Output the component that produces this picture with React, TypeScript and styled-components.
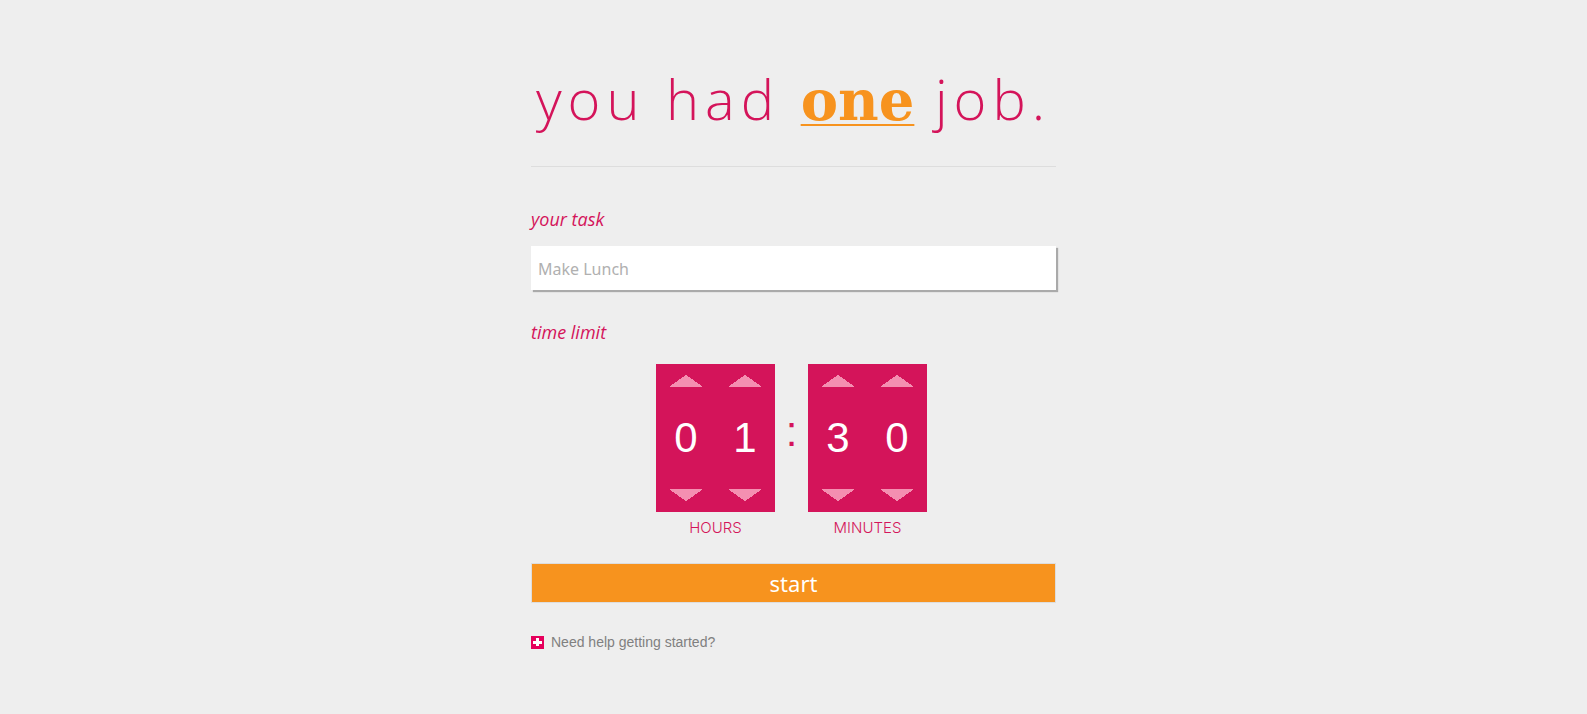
import React, { useState } from "react";
import styled, { createGlobalStyle } from "styled-components";

const pink = "#d4145a";
const orange = "#f7931e";

const GlobalStyle = createGlobalStyle`
  * { box-sizing: border-box; }
  body {
    margin: 0;
    background: #eee;
    color: ${pink};
    font-family: "Open Sans", sans-serif;
  }
`;

const Page = styled.main`
  width: 100%;
  max-width: 525px;
  margin: 0 auto;
  padding: 58px 0 40px;
`;

const Title = styled.h1`
  margin: 0;
  padding-bottom: 28px;
  border-bottom: 1px solid #ddd;
  font-size: 56px;
  font-weight: 300;
  line-height: 80px;
  letter-spacing: 6px;
  text-align: center;
  white-space: nowrap;
`;

const One = styled.em`
  color: ${orange};
  font-family: "DejaVu Serif", serif;
  font-style: normal;
  font-weight: 700;
  letter-spacing: 0;
  line-height: 1;
  text-decoration: underline;
  text-decoration-thickness: 2px;
  text-underline-offset: 4px;
`;

const Form = styled.form`
  display: flex;
  flex-direction: column;
  margin-top: 40px;
`;

const Label = styled.label`
  font-size: 18px;
  font-style: italic;
  line-height: 24px;
`;

const TaskInput = styled.input`
  width: 100%;
  height: 44px;
  margin: 15px 0 30px;
  padding: 2px 7px 0;
  border: 0;
  border-radius: 0;
  background: #fff;
  box-shadow: 2px 2px 1px #aaa;
  color: #555;
  font-family: "Noto Sans", sans-serif;
  font-size: 16px;
  &::placeholder { color: #b0b0b0; opacity: 1; }
`;

const Fieldset = styled.fieldset`
  min-width: 0;
  margin: 0;
  padding: 0;
  border: 0;
`;

const Legend = styled.legend`
  padding: 0;
  font-size: 18px;
  font-style: italic;
  line-height: 24px;
`;

const Clock = styled.div`
  display: flex;
  justify-content: center;
  margin-top: 20px;
  padding-right: 4px;
`;

const Unit = styled.div`
  width: 119px;
  text-align: center;
`;

const Panel = styled.div`
  display: flex;
  justify-content: center;
  gap: 1px;
  height: 148px;
  background: ${pink};
`;

const Wheel = styled.div`
  display: flex;
  flex-direction: column;
  align-items: center;
  justify-content: space-between;
  width: 58px;
  padding: 11px 0;
`;

const Step = styled.button`
  padding: 0;
  border: 0;
  background: none;
  cursor: pointer;
  line-height: 0;
`;

const Digit = styled.output`
  color: #fff;
  font-family: "Liberation Sans", Arial, sans-serif;
  font-size: 42px;
  line-height: 48px;
`;

const Caption = styled.div`
  margin-top: 4px;
  font-family: Inter, sans-serif;
  font-size: 15px;
  font-weight: 300;
  line-height: 24px;
`;

const Colon = styled.span`
  width: 33px;
  height: 148px;
  font-family: "Liberation Sans", Arial, sans-serif;
  font-size: 42px;
  line-height: 136px;
  text-align: center;
`;

const Start = styled.button`
  width: 100%;
  height: 40px;
  margin-top: 23px;
  padding: 0;
  border: 1px solid #ddd;
  background: ${orange};
  color: #fff;
  font-family: "Noto Sans", sans-serif;
  font-size: 22px;
  line-height: 36px;
  cursor: pointer;
`;

const Help = styled.a`
  display: inline-flex;
  align-items: center;
  gap: 7px;
  margin-top: 29px;
  color: #808080;
  font-family: "Liberation Sans", Arial, sans-serif;
  font-size: 14px;
  line-height: 20px;
  text-decoration: none;
`;

const limits = [10, 10, 6, 10];

function Arrow({ down = false }: { down?: boolean }) {
  return (
    <svg width="32" height="12" viewBox="0 0 32 12" shapeRendering="crispEdges" aria-hidden="true">
      <path d={down ? "M0 0v1l16 11L32 1V0z" : "M0 12v-1L16 0l16 11v1z"} fill="#f48fb1" />
    </svg>
  );
}

export default function App() {
  const [digits, setDigits] = useState([0, 1, 3, 0]);
  const turn = (i: number, by: number) =>
    setDigits((old) => old.map((d, n) => (n === i ? (d + by + limits[n]) % limits[n] : d)));

  const unit = (name: string, first: number) => (
    <Unit>
      <Panel>
        {[first, first + 1].map((i) => (
          <Wheel key={i}>
            <Step type="button" aria-label={`Increase ${name} digit`} onClick={() => turn(i, 1)}>
              <Arrow />
            </Step>
            <Digit>{digits[i]}</Digit>
            <Step type="button" aria-label={`Decrease ${name} digit`} onClick={() => turn(i, -1)}>
              <Arrow down />
            </Step>
          </Wheel>
        ))}
      </Panel>
      <Caption>{name}</Caption>
    </Unit>
  );

  return (
    <>
      <GlobalStyle />
      <Page>
        <Title>
          you had <One>one</One> job.
        </Title>
        <Form onSubmit={(e) => e.preventDefault()}>
          <Label htmlFor="task">your task</Label>
          <TaskInput id="task" type="text" placeholder="Make Lunch" />
          <Fieldset>
            <Legend>time limit</Legend>
            <Clock>
              {unit("HOURS", 0)}
              <Colon>:</Colon>
              {unit("MINUTES", 2)}
            </Clock>
          </Fieldset>
          <Start type="submit">start</Start>
        </Form>
        <Help href="#help">
          <svg width="13" height="13" viewBox="0 0 13 13" shapeRendering="crispEdges" aria-hidden="true">
            <path d="M0 0h13v13H0z" fill="#e6005c" />
            <path d="M5 2h3v3h3v3H8v2H5V8H2V5h3z" fill="#fff" />
          </svg>
          Need help getting started?
        </Help>
      </Page>
    </>
  );
}
